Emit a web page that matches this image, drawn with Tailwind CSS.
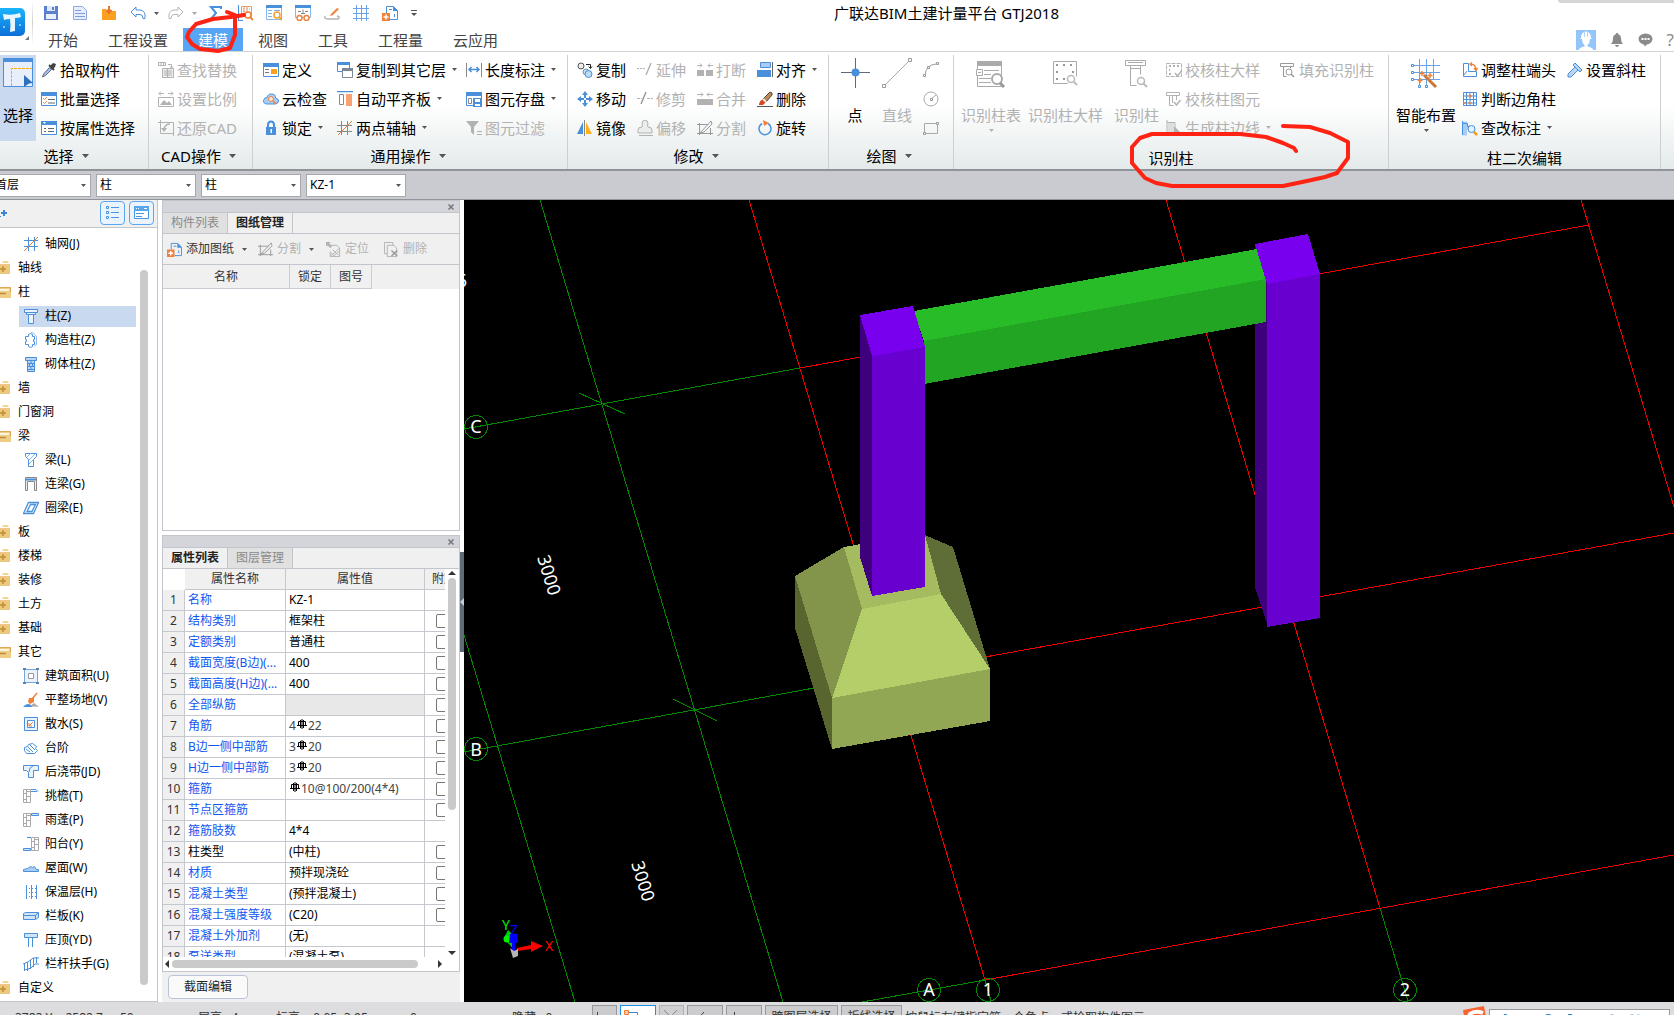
<!DOCTYPE html>
<html lang="zh-CN">
<head>
<meta charset="utf-8">
<title>广联达BIM土建计量平台 GTJ2018</title>
<script src="https://cdn.jsdelivr.net/npm/@tailwindcss/browser@4"></script>
</head>
<body class="relative flex h-screen flex-col overflow-hidden bg-white font-['Noto_Sans','Noto_Sans_CJK_SC',sans-serif] text-xs text-black">

<header class="flex h-[52px] shrink-0 border-b border-[#d4d4d4]">
  <div class="flex w-8 shrink-0 items-start pt-2">
    <svg class="h-8 w-8" viewBox="0 0 32 32" aria-label="GTJ"><defs><linearGradient id="lg" x1="0" y1="0" x2="0" y2="1"><stop offset="0" stop-color="#19b4fa"/><stop offset="1" stop-color="#0d6fd8"/></linearGradient></defs><rect x="-4" y="0" width="29" height="28" rx="5" fill="url(#lg)"/><path d="M3 6q9 2 17-1l1 4q-3 1-6 1v13l-5 1q1-7 0-13-4 0-6 1z" fill="#e8f7ff"/><circle cx="4" cy="19" r="1" fill="#9be0ff"/><circle cx="20" cy="17" r="1" fill="#9be0ff"/><path d="M29 28v4h-4z" fill="#777"/></svg>
  </div>
  <div class="h-[45px] w-px bg-linear-to-b from-white via-[#d0d0d0] to-white"></div>
  <div class="flex min-w-0 flex-1 flex-col">
    <div class="flex h-[28px] shrink-0 items-center pb-[2px] pl-1">
      <div id="quick" class="flex w-[392px] shrink-0 items-center"></div>
      <h1 class="flex-1 pr-[210px] text-center text-[15px] leading-6 whitespace-nowrap">广联达BIM土建计量平台 GTJ2018</h1>
    </div>
    <div class="flex min-h-0 flex-1 items-stretch">
      <nav id="tabs" class="flex text-[15px] text-[#444]"></nav>
      <div class="ml-auto flex shrink-0 items-center gap-[14px] text-[#8a8a8a]">
        <button aria-label="用户" class="block"><svg class="size-5" viewBox="0 0 20 20"><rect width="20" height="20" fill="#92c6fb"/><path d="M5 8q0-6 5-6.500q5 .5 5 6.500l1 1H4zM6 9h8q0 4-2.500 6v1.500q5 1 6 3.500h-15q1-2.500 6-3.500V15Q6 13 6 9z" fill="#fff"/><path d="M8.500 2v5M11.500 2v5" stroke="#92c6fb" stroke-width=".7"/></svg></button>
        <button aria-label="通知" class="block"><svg class="size-[14px]" viewBox="0 0 14 14" fill="currentColor"><path d="M7 0q1.300 0 1.300 1.200Q11 2.200 11 5.500q0 3.500 2 5.500H1q2-2 2-5.500 0-3.300 2.700-4.300Q5.700 0 7 0zM5 12h4q-.5 2-2 2t-2-2z"/></svg></button>
        <button aria-label="消息" class="block"><svg class="size-[15px]" viewBox="0 0 15 15"><ellipse cx="7.500" cy="7" rx="7" ry="5.500" fill="currentColor"/><path d="M5 11h5l-3 3.500z" fill="currentColor"/><path d="M3.500 6h2v2h-2zM6.500 6h2v2h-2zM9.500 6h2v2h-2z" fill="#fff"/></svg></button>
        <button aria-label="帮助" class="text-[17px] leading-5">?</button>
      </div>
    </div>
  </div>
</header>

<section id="ribbon" aria-label="建模" class="flex h-[119px] shrink-0 overflow-hidden border-b-2 border-[#90949a] bg-linear-to-b from-white from-45% to-[#e4eaea]"></section>

<div id="combos" class="flex h-[29px] shrink-0 items-center gap-[5px] border-b border-[#90949a] bg-[#c9cbd0]"></div>

<main class="flex min-h-0 flex-1">
  <aside class="flex w-[158px] shrink-0 flex-col border-r border-b border-[#c2c5ca] bg-white">
    <div class="flex h-7 shrink-0 items-center border-b border-[#c2c5ca] bg-[#f0f0f0] pb-[2px]">
      <svg class="h-4 w-2" viewBox="0 0 8 16"><path d="M4 5v6M1 8h6" stroke="#3d85d6" stroke-width="2"/><path d="M0 11h1v1H0z" fill="#3d85d6"/></svg>
      <button aria-label="列表视图" class="ml-[92px] flex h-6 w-[25px] items-center justify-center rounded border border-[#5ba7ee] bg-[#eaf4ff]"><svg class="size-[15px]" viewBox="0 0 15 15" fill="none" stroke="#4a95e0"><path d="M1.500 1.500h2v2h-2zM1.500 6.500h2v2h-2zM1.500 11.500h2v2h-2zM6 2.500h8M6 7.500h8M6 12.500h8"/></svg></button>
      <button aria-label="面板视图" class="ml-1 flex h-6 w-[25px] items-center justify-center rounded border border-[#5ba7ee] bg-[#eaf4ff]"><svg class="size-[15px]" viewBox="0 0 15 15"><path d="M.5 1.500h14v12H.5z" fill="#fff" stroke="#4a95e0"/><path d="M0 1h15v5H0z" fill="#58a5ec"/><path d="M2 3h1v1H2zM4 3h1v1H4zM10 3h3v1h-3z" fill="#fff"/><path d="M2 8.500h8M2 11.500h6" stroke="#4a95e0"/></svg></button>
    </div>
    <div class="flex min-h-0 flex-1 overflow-hidden">
      <ul id="tree" class="w-[140px] shrink-0 pt-1"></ul>
      <div class="mt-[42px] mb-4 w-2 rounded-full bg-[#cacaca]"></div>
    </div>
  </aside>

  <div class="flex w-[302px] shrink-0 flex-col pl-1">
    <section aria-label="图纸管理" class="flex h-[331px] shrink-0 flex-col border border-[#c2c5cc]">
      <div class="flex h-[11px] shrink-0 items-center justify-end bg-[#d3d5db] pr-1"><button aria-label="关闭" class="block"><svg class="size-2" viewBox="0 0 8 8"><path d="M1.500 1.500l5 5M6.500 1.500l-5 5" stroke="#777" stroke-width="1.500"/></svg></button></div>
      <div class="flex h-[22px] shrink-0 border-y border-[#c2c5cc] bg-[#f0f0f0] leading-5">
        <button class="w-[65px] border-r border-[#c2c5cc] bg-[#e0e0e0] text-[#8a8a8a]">构件列表</button>
        <button class="w-[65px] border-r border-[#c2c5cc] font-bold text-[#222]">图纸管理</button>
      </div>
      <div id="sheetbar" class="flex h-[31px] shrink-0 items-center border-b border-[#c2c5cc] bg-[#f0f0f0] pl-1"></div>
      <table class="w-full table-fixed border-separate border-spacing-0 bg-[#f0f0f0] text-[#333]">
        <thead><tr class="h-6"><th class="w-[127px] border-r border-b border-[#c9ccd2] p-0 font-normal">名称</th><th class="w-[41px] border-r border-b border-[#c9ccd2] p-0 font-normal">锁定</th><th class="w-[41px] border-r border-b border-[#c9ccd2] p-0 font-normal">图号</th><td></td></tr></thead>
      </table>
    </section>

    <section aria-label="属性列表" class="mt-1 flex min-h-0 flex-1 flex-col bg-[#f0f0f0]">
      <div class="flex min-h-0 flex-1 flex-col border border-[#c2c5cc] bg-white">
        <div class="flex h-[11px] shrink-0 items-center justify-end bg-[#d3d5db] pr-1"><button aria-label="关闭" class="block"><svg class="size-2" viewBox="0 0 8 8"><path d="M1.500 1.500l5 5M6.500 1.500l-5 5" stroke="#777" stroke-width="1.500"/></svg></button></div>
        <div class="flex h-[22px] shrink-0 border-y border-[#c2c5cc] bg-[#f0f0f0] leading-5">
          <button class="w-[65px] border-r border-[#c2c5cc] font-bold text-[#222]">属性列表</button>
          <button class="w-[65px] border-r border-[#c2c5cc] bg-[#e0e0e0] text-[#8a8a8a]">图层管理</button>
        </div>
        <div class="flex min-h-0 flex-1">
          <div class="w-[282px] shrink-0 overflow-hidden">
            <table class="w-[300px] table-fixed border-separate border-spacing-0">
              <colgroup><col class="w-[22px]"><col class="w-[101px]"><col class="w-[139px]"><col></colgroup>
              <thead><tr class="h-[21px] bg-[#f0f0f0] text-[#333]"><td class="bg-white"></td><th class="border-r border-b border-[#c5c8ce] p-0 leading-4 font-normal">属性名称</th><th class="border-r border-b border-[#c5c8ce] p-0 leading-4 font-normal">属性值</th><th class="border-b border-[#c5c8ce] py-0 pr-0 pl-[7px] text-left leading-4 font-normal whitespace-nowrap">附加</th></tr></thead>
              <tbody id="props"></tbody>
            </table>
          </div>
          <div class="ml-[3px] flex w-2 flex-col items-center gap-[3px] py-[2px]">
            <svg class="h-1 w-2 shrink-0" viewBox="0 0 8 4"><path d="M0 4l4-4 4 4z" fill="#333"/></svg>
            <div class="min-h-0 w-full flex-[233] rounded-full bg-[#cacaca]"></div>
            <div class="flex-[136]"></div>
            <svg class="h-1 w-2 shrink-0" viewBox="0 0 8 4"><path d="M0 0l4 4 4-4z" fill="#333"/></svg>
          </div>
        </div>
        <div class="flex h-[14px] shrink-0 items-center pl-[2px]">
          <svg class="h-2 w-1" viewBox="0 0 4 8"><path d="M4 0v8L0 4z" fill="#333"/></svg>
          <div class="ml-[3px] h-2 w-[246px] rounded-full bg-[#cacaca]"></div>
          <svg class="ml-5 h-2 w-1" viewBox="0 0 4 8"><path d="M0 0v8l4-4z" fill="#333"/></svg>
        </div>
      </div>
      <div class="flex h-[30px] shrink-0 items-center pl-1.5"><button class="h-6 w-20 rounded-sm border border-[#b9c4d8] bg-[#fafafa] text-[#222]">截面编辑</button></div>
    </section>
  </div>

  <div class="flex w-1 shrink-0 flex-col pt-[352px]"><div class="flex h-[100px] items-center bg-[#5f6b76]"><svg class="h-2 w-1" viewBox="0 0 4 8"><path d="M4 0v8L0 4z" fill="#c5ccd3"/></svg></div></div>

  <div class="relative min-w-0 flex-1 bg-black">
    <svg class="absolute inset-0 h-full w-full font-['Noto_Sans',sans-serif]" viewBox="464 200 1210 802" preserveAspectRatio="xMinYMin slice" shape-rendering="crispEdges" aria-label="三维视图">
      <g stroke="#008a00" fill="none">
        <path d="M540 200L783 1002M464 635L575 1002M464 429L800 368M464 752L814 688M579 393L625 414M673 699L717 721M862 1002L985 980L991 1001M1380 908L1408 1001"/>
      </g>
      <g stroke="#f00000" fill="none">
        <path d="M749 200L985 980L1674 855M1166 200L1380 908M1581 200L1674 507M800 368L1589 225M985 657L1674 533"/>
      </g>
      <path d="M795 576L844 547L862 609L832 698z" fill="#83954a"/>
      <path d="M795 576L832 698V749L795 628z" fill="#58652f"/>
      <path d="M844 547L925 533L941 594L862 609z" fill="#a5bb5f"/>
      <path d="M925 535L953 547L990 669L941 594z" fill="#5f6e37"/>
      <path d="M862 609L941 594L990 669L832 698z" fill="#b4ce69"/>
      <path d="M832 698L990 669V721L832 749z" fill="#91a754"/>
      <path d="M1255 244L1268 284V627L1255 587z" fill="#3f007d"/>
      <path d="M914 311L1257 249L1266 279L924 341z" fill="#28bd28"/>
      <path d="M924 341L1266 279V322L924 384z" fill="#22a522"/>
      <path d="M1267 284L1320 274V618L1267 627z" fill="#6800d0"/>
      <path d="M1255 244L1308 234L1320 274L1267 284z" fill="#7800ee"/>
      <path d="M860 315L872 356V596L860 557z" fill="#3f007d"/>
      <path d="M872 356L925 347V587L872 596z" fill="#6800d0"/>
      <path d="M860 315L913 306L925 347L872 356z" fill="#7800ee"/>
      <g stroke="#008a00" fill="none"><circle cx="476" cy="427" r="11.500"/><circle cx="476" cy="749" r="11.500"/><circle cx="929" cy="990" r="11.500"/><circle cx="988" cy="990" r="11.500"/><circle cx="1405" cy="990" r="11.500"/></g>
      <g fill="#fff" font-size="18" text-anchor="middle">
        <text x="476" y="433">C</text><text x="476" y="756">B</text><text x="929" y="996">A</text><text x="988" y="996">1</text><text x="1405" y="996">2</text>
        <text transform="translate(543 577) rotate(73)">3000</text><text transform="translate(637 883) rotate(73)">3000</text><text x="462" y="287">6</text>
      </g>
      <g shape-rendering="auto">
        <path d="M514 950L504 938L508 930L514 936z" fill="#00d000"/>
        <circle cx="507" cy="939" r="3.500" fill="#00f000"/>
        <path d="M512 952h3v-9h3l-1-9h-7l-1 9h3z" fill="#0000ff"/>
        <path d="M517 948l14-3v-4l12 5-12 6v-3l-14 2z" fill="#f00"/>
        <path d="M510 948l4 3 4-2v7l-5 2z" fill="#b5b5b5"/>
      </g>
      <g font-size="14" text-anchor="middle"><text x="506" y="930" fill="#00f000">Y</text><text x="514" y="935" fill="#00f">Z</text><text x="549" y="951" fill="#f00">X</text></g>
    </svg>
  </div>
</main>

<footer class="flex h-[13px] shrink-0 items-start overflow-hidden bg-[#dddddf] pt-[3px] leading-5 whitespace-nowrap text-[#333]">
  <span class="mt-[3px] w-[198px] shrink-0 pl-[15px]">3782 Y = 2582 Z = -50</span>
  <span class="mt-[3px] w-[78px] shrink-0">层高:&nbsp; 4</span>
  <span class="mt-[3px] w-[134px] shrink-0">标高:&nbsp; -0.05~3.95</span>
  <span class="mt-[3px] w-[102px] shrink-0">0</span>
  <span class="mt-[3px] w-20 shrink-0">隐藏:&nbsp; 0</span>
  <div class="flex shrink-0 gap-[3px]">
    <button aria-label="正交" class="h-6 w-[25px] border border-[#999] bg-[#ccccce]"><svg class="size-5" viewBox="0 0 20 20"><path d="M4.500 5v11h11" stroke="#444" fill="none"/></svg></button>
    <button aria-label="对象捕捉" class="h-6 w-9 border border-[#1e8fe8] bg-white"><svg class="h-5 w-8" viewBox="0 0 32 20"><path d="M5.500 5.500h11v11" stroke="#3f87d2" fill="none"/><path d="M3.500 3.500h4v4h-4z" fill="#fcc79a" stroke="#f08040"/></svg></button>
    <button aria-label="交点" class="h-6 w-[25px] border border-[#b0b0b0] bg-[#cfcfd1]"><svg class="size-5" viewBox="0 0 20 20"><path d="M4 3l12 13M17 3L5 16" stroke="#888"/></svg></button>
    <button aria-label="垂点" class="h-6 w-9 border border-[#999] bg-[#ccccce]"><svg class="h-5 w-8" viewBox="0 0 32 20"><path d="M16 5L6 16h20" stroke="#444" fill="none"/></svg></button>
    <button aria-label="中点" class="h-6 w-9 border border-[#999] bg-[#ccccce]"><svg class="h-5 w-8" viewBox="0 0 32 20"><path d="M7.500 5v12M3 9.500h9" stroke="#444"/></svg></button>
    <button class="h-6 w-[73px] border border-[#999] bg-[#ccccce]">跨图层选择</button>
    <button class="h-6 w-[61px] border border-[#999] bg-[#ccccce]">折线选择</button>
  </div>
  <span class="mt-[3px] ml-[3px]">按鼠标左键指定第一个角点，或拾取构件图元</span>
  <div class="mr-1 ml-auto flex shrink-0">
    <svg class="h-6 w-[26px]" viewBox="0 0 26 24"><path d="M0 5l21-4 4 22H3z" fill="#f9622f"/><path d="M20 8q-8-3-13 1-2 4 5 5t6 6" stroke="#fff" stroke-width="4" fill="none"/></svg>
    <div class="mt-1 h-6 w-[181px] border border-[#999] bg-white"><svg class="h-5 w-full" viewBox="0 0 181 20" fill="#2a7fd0"><path d="M14 4h3v10h-3zM54 6q5-4 10 0v2H54zM79 4h4v6h-4z"/><path d="M122 4h3v8h-3zM142 4h3v8h-3zM149 4h2v8h-2z" fill="#a8c8e8"/></svg></div>
  </div>
</footer>

<div class="absolute top-0 right-0 h-[3px] w-[116px] rounded-bl bg-[#d6d6d6]"></div>

<!-- Pen marks drawn over the ribbon -->
<svg class="pointer-events-none absolute top-0 left-0 h-[200px] w-[1400px]" viewBox="0 0 1400 200" fill="none" stroke="#ff2314" stroke-linecap="round" stroke-linejoin="round">
  <path stroke-width="4" d="M244 15L231 17L213 19L196 24L189 32L187 37L192 44L200 49L218 51L230 48L235 35L235 15L227 12"/>
  <path stroke-width="4" d="M1296 151L1294 148L1283 143L1266 137L1240 134H1152L1140 138L1132 147V163L1145 178L1156 183L1172 186H1283L1307 181L1325 177L1337 173L1348 158V142L1330 133L1310 127L1283 126"/>
</svg>

<script>
const B='#4a8fdb', G='#b2b2b2', O='#f0813a';
const win=(c)=>`<path d="M.5 1.500h15v13H.5z" fill="#fff" stroke="${c}"/><path d="M0 1h16v4H0z" fill="${c}"/>`;
const column=(c,f='none')=>`<path d="M1.500 1.500h13v3h-2v2h-2v9h-5v-9h-2v-2h-2z" fill="${f}" stroke="${c}"/><path d="M3 4.500h10M5.500 6.500h5" stroke="${c}"/>`;
const wall='<path d="M.5 1.500h7v13h-7zM.5 5.500h3M3.500 3.500h4M3.500 1.500v13M3.500 8.500h4M.5 11.500h3" fill="none" stroke="#aaa"/>';
const icons={
save:`<path d="M1 1h14v14H1z" fill="#5b80cf"/><path d="M4 1h8v5H4z" fill="#dfe9fb"/><path d="M9 2h2v3H9z" fill="#5b80cf"/><path d="M3 9h10v5H3z" fill="#e9f0fc"/>`,
doc:`<path d="M1.500 1.500h9l4 4v9h-13z" fill="#e6eeff" stroke="#8fa9e0"/><path d="M3 5.500h6M3 8.500h10M3 11.500h10" stroke="#7d9be0"/>`,
open:`<path d="M1 4h4l1 2h9v9H1z" fill="#fba01f"/><path d="M8 1v6M5.500 5L8 8l2.500-3" stroke="#e8742a" stroke-width="2" fill="none"/>`,
undo:`<path d="M6 2L1 7l5 5V9.500h4q3 0 3 4h2q1-8-5-8.500H6z" fill="#fff" stroke="${B}"/>`,
redo:`<path d="M10 2l5 5-5 5V9.500H6q-3 0-3 4H1Q0 5.500 6 5h4z" fill="#fff" stroke="#b5b5b5"/>`,
sigma:`<path d="M13 4V2H3l5 6-5 6h10v-2.500" fill="none" stroke="${B}" stroke-width="2"/>`,
sheetfind:`<path d="M1.500 0v15M1 15.500h5" stroke="${B}"/><path d="M4.500 1.500h10v10h-10z" fill="#fff" stroke="#e59a6a"/><path d="M6 4h7M6 7h7M7 2v7M10 2v7" stroke="#e59a6a" stroke-dasharray="2 1"/><circle cx="11" cy="10" r="3" fill="#fff" stroke="${O}" stroke-width="1.500"/><path d="M13 12l3 3" stroke="${O}" stroke-width="2"/>`,
winfind:`<path d="M.5.500h15v14H.5z" fill="#fff" stroke="#8ab8ea"/><path d="M0 0h16v3H0z" fill="${B}"/><path d="M2 5.500h4M2 8.500h4M2 11.500h4M8 5.500h6" stroke="#7fb2ea"/><circle cx="11" cy="10" r="3" fill="#fff" stroke="#f5a032" stroke-width="1.500"/><path d="M13 12l3 3" stroke="#f5a032" stroke-width="2"/>`,
winglass:`<path d="M.5.500h15v12H.5z" fill="#fff" stroke="#8ab8ea"/><path d="M0 0h16v3H0z" fill="${B}"/><path d="M3 6.500h3M10 6.500h3M8 4.500v4M6 8.500h4" stroke="#888"/><circle cx="4.500" cy="13" r="2.500" fill="#fff" stroke="${O}" stroke-width="1.400"/><circle cx="11.500" cy="13" r="2.500" fill="#fff" stroke="${O}" stroke-width="1.400"/>`,
pen:`<path d="M7 9l6-6 2 1-6 6-3 1z" fill="${O}"/><path d="M1 11q-1 3 3 3h10q3-2-1-3" fill="none" stroke="#b5b5b5" stroke-width="1.500"/>`,
axis:`<path d="M3.500 0v16M8.500 0v16M13.500 0v16M0 3.500h16M0 8.500h16M0 13.500h16" stroke="#6ba4e6"/>`,
add:`<path d="M4.500 8V1.500h7l4 4v9H8M7 4.500h3M12.500 12V9" fill="none" stroke="${B}"/><path d="M11 1v5h5z" fill="${B}"/><path d="M0 8h8v8H0z" fill="${O}"/><path d="M4 9.500v5M1.500 12h5" stroke="#fff" stroke-width="1.500"/>`,
more:`<path d="M5 5.500h6" stroke="#555"/><path d="M5 8h6l-3 3z" fill="#555"/>`,
pick:`<path d="M9 4l3-3 3 1-1 3-3 3z" fill="#444"/><path d="M8 3l5 5" stroke="#444" stroke-width="2"/><path d="M8.500 5.500l2 2-6 6-3 1.500 1-3z" fill="#9cc3ef" stroke="#667"/>`,
batch:`${win(B)}<path d="M2 7l1.500 1.500L6 6M2 11l1.500 1.500L6 10" stroke="${O}" fill="none"/><path d="M7 8.500h7M7 12h7" stroke="#666"/>`,
attr:`${win(B)}<path d="M2 2h3l-1.500 2z" fill="#fff"/><path d="M3 8.500h2M7 8.500h6M3 11.500h2M7 11.500h6" stroke="#666"/>`,
findrep:`<path d="M.5.500h7v3h-7zM3 0v4M5.500 0v4M10 2.500h3.500V6M12 4.500l1.500 1.500 1.500-1.500" stroke="${G}" fill="none"/><path d="M4.500 6.500h11v9h-11z" stroke="${G}" fill="#eee"/><path d="M6 9h8M6 11h8M6 13h8M9.500 7v8" stroke="${G}"/>`,
scale:`<path d="M1 2.500h5M10 2.500h5M3 .5l-2 2 2 2M13 .5l2 2-2 2M.5 6.500h15v9H.5z" stroke="${G}" fill="none"/><path d="M2 14l4-5 3 3 2-2 3 4z" fill="${G}"/>`,
restore:`<path d="M0 2.500h15.500V16M2.500 0v13.500H16" stroke="${G}" fill="none"/><path d="M12 4q-5 0-6 5" stroke="${G}" stroke-width="1.500" fill="none"/><path d="M3 8h6l-3 4z" fill="${G}"/>`,
define:`${win(B)}<path d="M2 7.500h4M2 10.500h4" stroke="#777"/><path d="M8 7h6v5H8z" fill="#f9a31b"/>`,
cloud:`<path d="M4 13q-4-.5-3.500-3.500T4 6.500Q5 2.500 9 3t3.500 4q3 .5 3 3T12 13z" fill="#a9cdf4" stroke="${B}"/><circle cx="8" cy="8" r="2.500" fill="#fbe3d0" stroke="${O}"/><path d="M10 10l3 3" stroke="${O}" stroke-width="1.500"/>`,
lock:`<path d="M5 8V5q0-3.500 3-3.500T11 5v3" fill="none" stroke="${B}" stroke-width="2"/><path d="M3 7h10v8H3z" fill="${B}"/><path d="M7.500 9h1.500v4H7.500z" fill="#fff"/>`,
layer:`<path d="M.5.500h12v9H.5z" fill="#fff" stroke="${B}"/><path d="M0 0h13v3H0z" fill="${B}"/><path d="M5.500 6.500h10v9h-10z" fill="#fff" stroke="#7b8896"/><path d="M5 6h11v3H5z" fill="#7b8896"/>`,
slab:`<path d="M0 .5h16" stroke="${B}" stroke-width="1.500"/><path d="M2.500 3.500h4v10h-4z" fill="none" stroke="#888"/><path d="M9 3h6v12H9z" fill="#fba06f"/>`,
twopt:`<path d="M4.500 1v14M10.500 1v14M0 5.500h15M0 11.500h15" stroke="#888"/><path d="M1 15L15 1" stroke="${O}"/>`,
len:`<path d="M.5 1v14M15.500 1v14" stroke="#888"/><path d="M3 7.500h10M5.500 5L3 7.500 5.500 10M10.500 5L13 7.500 10.500 10" stroke="${B}" stroke-width="1.500" fill="none"/>`,
store:`${win(B)}<path d="M2.500 7.500h3v5h-3z" fill="none" stroke="#888"/><path d="M7 7h9v9H7z" fill="${B}"/><path d="M9 8h5v3H9zM9 13h5v2H9z" fill="#fff"/>`,
filter:`<path d="M0 1h13L8 7v8l-3-3V7z" fill="${G}"/><path d="M11 11.500h5M11 14.500h5" stroke="${G}"/>`,
copy:`<circle cx="4" cy="4" r="3" fill="#eee" stroke="#555"/><path d="M9 2.500h4.500V6M11.500 4.500l2 2 1.500-2" stroke="#222" fill="none"/><circle cx="9" cy="10" r="3" fill="#cde" stroke="#6899bb"/><circle cx="11.500" cy="12" r="3.500" fill="#bcdcf6" stroke="${B}"/>`,
move:`<path d="M8 0l3 4H9v3H7V4H5zM8 16l3-4H9V9H7v3H5zM0 8l4-3v2h3v2H4v2zM16 8l-4-3v2H9v2h3v2z" fill="${B}"/>`,
mirror:`<path d="M6 2v12H0z" fill="${B}"/><path d="M9 2v12h6z" fill="#fbb21b"/><path d="M7.500 0v16" stroke="#888"/>`,
extend:`<path d="M0 6.500h9" stroke="${G}" stroke-dasharray="2 1"/><path d="M9 13l5-12" stroke="${G}" stroke-width="1.500"/>`,
trim:`<path d="M0 7.500h5M10 7.500h6" stroke="${G}" stroke-dasharray="3 1"/><path d="M4 13L9 1" stroke="#999" stroke-width="1.500"/>`,
offset:`<path d="M1 10q0-3 4-3 1-2 0-3 0-4 3-4t3 4q-1 1 0 3 4 0 4 3v3H1z" fill="#ececec" stroke="${G}"/><path d="M2 15.500h14" stroke="${G}"/>`,
brk:`<path d="M0 3.500h5M11 3.500h5M3 1.500l2 2-2 2M13 1.500l-2 2 2 2" stroke="${G}" fill="none"/><path d="M0 8h7v6H0zM9 8h7v6H9z" fill="${G}"/>`,
merge:`<path d="M0 3.500h6M10 3.500h6M4 1.500l2 2-2 2M12 1.500l-2 2 2 2" stroke="${G}" fill="none"/><path d="M0 8h16v6H0z" fill="${G}"/>`,
split:`<path d="M0 4.500h11M0 13.500h16M2.500 3v12M13.500 8v7M3 13L14 1l1 3-8 8z" fill="none" stroke="#999"/>`,
align:`<path d="M3.500.500h10v5h-10z" fill="#a8cdf5" stroke="${B}"/><path d="M0 8h14v7H0z" fill="${B}"/><path d="M15.500 0v15" stroke="#666"/>`,
erase:`<path d="M0 15.500h16" stroke="#555"/><path d="M6 8l7-7 2 1v2l-6 7z" fill="#b98d5a" stroke="#543"/><path d="M6 8l3 3-3 3H2q0-4 4-6z" fill="#d8451f"/><path d="M6 8l3 3" stroke="#eee" stroke-width="2"/>`,
rotate:`<path d="M11 3.500a6 6 0 1 1-6 0" fill="none" stroke="${B}" stroke-width="1.500"/><path d="M6 0l6 3-5 3z" fill="${O}"/>`,
arc:`<path d="M2 13Q3 3 13 2" stroke="#999" fill="none"/><path d="M.5 12.500h2v2h-2zM13.500.500h2v2h-2zM4.500 4.500h2v2h-2z" fill="#fff" stroke="#999"/>`,
circ:`<circle cx="8" cy="8" r="7" fill="none" stroke="#aaa"/><path d="M8 8l5-4" stroke="#aaa"/><path d="M7.500 7.500h2v2h-2z" fill="#fff" stroke="#999"/>`,
rect:`<path d="M1.500 3.500h13v10h-13z" fill="none" stroke="#aaa"/><path d="M.5 12.500h2v2h-2zM13.500 2.500h2v2h-2z" fill="#fff" stroke="#999"/>`,
chk1:`<path d="M.5 1.500h15v13H.5z" fill="none" stroke="${G}" stroke-dasharray="4 1"/><path d="M3 4h2M7 4h2M11 4h2M3 8h1M3 12h2" stroke="${G}" stroke-width="2"/><path d="M9 11l2.500 3 4-5" stroke="${G}" fill="none" stroke-width="1.500"/>`,
chk2:`<path d="M.5 1.500h13v3h-3V9M.5 1.500v3h3v10h4" fill="none" stroke="${G}"/><path d="M4 4.500h7M6.500 5v7" stroke="${G}"/><path d="M8 11l2.500 3 4-5" stroke="${G}" fill="none" stroke-width="1.500"/>`,
edge:`<path d="M1 0v16M1 2.500h8V9" stroke="${G}" fill="none"/><path d="M2 3h7v11H2z" fill="#ddd"/><path d="M8 6l7 7h-4l-3 3z" fill="${G}"/>`,
fill:`<path d="M.5 1.500h13v3h-13zM3.500 4.500v10h3M10.500 4.500v2" fill="none" stroke="#999"/><circle cx="9" cy="10" r="3" fill="#fff" stroke="#999"/><path d="M11 12l3 3" stroke="#999" stroke-width="1.500"/>`,
adj:`<path d="M1.500 1.500h5v8h8v5h-13zM5 9l-3 4" fill="none" stroke="${B}"/><path d="M8 2q6 0 6 6M12 6l2 2.500L15.500 6M10 .5L8 2l2 2" stroke="${O}" stroke-width="1.300" fill="none"/>`,
judge:`<path d="M1.500 1.500h13v13h-13zM4.500 1v13M8 1v13M11.500 1v13M1 5h14M1 8.500h14M1 12h14" fill="none" stroke="${B}"/><path d="M6.500 5h3M8 3.500v3M1 12h3M6.500 12h3" stroke="${O}" stroke-width="1.500"/>`,
chkdim:`<path d="M0 1.500h5v4h3v4H5v6H.5z" fill="#a8cdf5"/><path d="M.5 1v14M0 3.500h5.500v3H8" stroke="${B}" fill="none"/><circle cx="9.500" cy="9" r="3.500" fill="#e5f1fd" stroke="${B}"/><path d="M12 12l3 3" stroke="#f59a1b" stroke-width="2.500"/>`,
slant:`<path d="M8 1l7 7-2 2-2-2-7 7H1v-3l7-7-2-2z" fill="#b8d6f7" stroke="${B}"/><path d="M6 3l7 7" stroke="${B}"/>`,
locate:`<path d="M4.500 6V3.500h7l3 3v9h-10V10" fill="none" stroke="${G}"/><path d="M0 0h5L3.500 1.500l3 3-2 2-3-3L0 5z" fill="${G}"/><path d="M5 15l9-8M5 11l4 4M8 15l6-5M7 8l6 6" stroke="${G}"/>`,
del:`<path d="M3.500 12.500h-3v-12h9v3M3.500 3.500h7l3 3v9h-10z" fill="none" stroke="${G}"/><path d="M8 9l6 6M14 9l-6 6" stroke="#999" stroke-width="1.500"/>`,
zw:`<path d="M5.500 1v14M11.500 1v14M1 4.500h14M1 10.500h14" stroke="${B}"/><path d="M1 15L15 1" stroke="${O}"/>`,
col:column(B,'#eaf3fd'),
gz:`<path d="M5.500 2.500l2-1 2 1v2h2v3h-1v2h1v3h-2v2l-2 1-2-1v-2h-3v-3h1v-2h-1v-3h3z" fill="#fff" stroke="${B}"/><path d="M8 .5q3 0 3.500 2l2 2v8l-2 1.500" stroke="#8ab8ea" fill="none"/>`,
brick:`<path d="M2.500 1.500h11v3h-2v11h-7v-11h-2z" fill="#b9d6f6" stroke="${B}"/><path d="M3 4.500h10M5 7.500h6M5 10.500h6M5 13.500h6M8 5v3M6.500 8v3M9.500 8v3M8 11v3" stroke="${B}"/>`,
beam:`<path d="M2.500 1.500h11v3l-3 3v7h-5v-7l-3-3z" fill="#fff" stroke="${B}"/><path d="M4 5l4-4M6 8l6-6M6 12l4-4" stroke="#8ab8ea"/>`,
lbeam:`<path d="M2.500 1.500h11v13h-2v-9h-7v9h-2z" fill="#eee" stroke="#888"/><path d="M3 3.500h10" stroke="${B}" stroke-width="2"/>`,
ring:`<path d="M5.500 2.500h10l-5 11H.5zM7.500 4.500h5l-3.500 7H4z" fill="none" stroke="${B}" stroke-width="1.300"/>`,
area:`<path d="M1.500 1.500h13v13h-13z" fill="#eaf3fd" stroke="#7aa6d8"/><path d="M5.500 5.500h5v5h-5z" fill="#fff" stroke="#999"/><path d="M0 0h3v2H0zM13 0h3v2h-3zM0 14h3v2H0zM13 14h3v2h-3z" fill="#5580b0"/>`,
level:`<path d="M0 15q4-5 8-2l2 2z" fill="${B}"/><path d="M7 14l4-3 5 4z" fill="#aaa"/><path d="M6 6h5v4l-4 2-2-2z" fill="${O}"/><path d="M9 7l5-6" stroke="${O}" stroke-width="1.500"/>`,
apron:`<path d="M1.500 1.500h13v13h-13z" fill="#eaf3fd" stroke="${B}"/><path d="M4.500 4.500h7v7h-7z" fill="#fff" stroke="${B}"/><path d="M10 6l-4 4M6 7v3h3" stroke="${O}" fill="none"/>`,
step:`<path d="M1.500 7.500l3-1 1-2 4-1 4 3-1 2 2 2-3 3h-8l-2-3zM5 7l5 5M7 5l5 5M3 9l4 3" fill="none" stroke="${B}"/>`,
post:`<path d="M.5 1.500h15v5h-5v7h-5v-5l-2-2h-3z" fill="#eaf3fd" stroke="${B}"/><path d="M6 8q0-5 4-6" stroke="${B}" fill="none"/>`,
eave:`${wall}<path d="M8 1.500h5l2 2M8 3.500h6" stroke="${B}" fill="none"/>`,
canopy:`${wall}<path d="M8.500 1.500h7v2h-7z" stroke="${B}" fill="#cfe3fa"/>`,
balcony:`<g transform="translate(8 0)">${wall}</g><path d="M.5 12.500h7v2h-7zM4 1.500h4" stroke="${B}" fill="#cfe3fa"/>`,
roof:`<path d="M.5 9.500l4-1 3-2 2 1 2-1 2 3h2v2H.5z" fill="#a8cbf2" stroke="${B}"/>`,
insul:`<path d="M3.500 1v14M8.500 1v14M13.500 1v14" stroke="${B}"/><path d="M3 4.500h11M3 8.500h11M3 12.500h11" stroke="${B}" stroke-dasharray="1 2"/>`,
fence:`<path d="M.5 5.500l2-1h13v5l-3 2H.5zM12.500 11V7l3-2M1 7.500h11" fill="#cfe3fa" stroke="${B}"/>`,
top:`<path d="M1.500 1.500h13v4h-13z" fill="#cfe3fa" stroke="${B}"/><path d="M5.500 6v9M9.500 6v9" stroke="${B}"/>`,
rail:`<path d="M1.500 7v8M4.500 6v9M7.500 4v9M10.500 2v9M13.500 1v6M0 8l5-2 5-4h6M2 14l6-2 4-4h4" fill="none" stroke="${B}"/>`,
closed:`<path d="M-4 4h14v10H-4z" fill="#eec87f"/><path d="M3 1h5l1 2H2z" fill="#f3d596"/><path d="M3 6v6M0 9h6" stroke="#c08f35" stroke-width="1.500"/>`,
opened:`<path d="M-4 3h15v11H-4z" fill="#f0cd86"/><path d="M-4 3.500h14.500V8" stroke="#dcab52" fill="none"/><path d="M0 5h9v2H0z" fill="#fff5dd"/><path d="M0 9.500h6" stroke="#c08f35" stroke-width="1.500"/>`
};
const big={
select:`<path d="M.5 2.500h29v26H.5z" fill="#e8eefa" stroke="${B}"/><path d="M0 0h30v4H0z" fill="${B}"/><path d="M8.500 28V10.500H29" fill="none" stroke="#f5a81b" stroke-dasharray="3 1"/><path d="M21 17l9 8-4 .5-5 3.500z" fill="#2f6fbd"/>`,
point:`<path d="M15.500 0v11M15.500 18v12M1 14.500h11M19 14.500h11" stroke="#5c6b7a"/><circle cx="15.500" cy="14.500" r="4" fill="${B}"/>`,
line:`<path d="M3 27L27 3" stroke="#aaa"/><path d="M.5 26.500h3v3h-3zM26.500.500h3v3h-3z" fill="#fff" stroke="#999"/>`,
tbl:`<path d="M1.500 3.500h24v25h-24z" fill="#fff" stroke="#aaa"/><path d="M1 3h25v5H1z" fill="#aaa"/><path d="M.5 11.500h6v6h-6zM2 14.500h3M8 12.500h15M8 16.500h7M3 20.500h12M3 24.500h12" stroke="#aaa" fill="#fff"/><circle cx="21" cy="21" r="5" fill="#fff" stroke="#aaa" stroke-width="2"/><path d="M24 25l4 4" stroke="#999" stroke-width="3"/>`,
detail:`<path d="M17 25.500H2.500v-22h23v15" fill="none" stroke="#aaa"/><path d="M5 6h2v2H5zM12 6h2v2h-2zM19 6h2v2h-2zM5 13h2v2H5zM5 20h2v2H5zM12 20h2v2h-2zM21 13h2v2h-2z" fill="#999"/><circle cx="20" cy="21" r="3.500" fill="#fff" stroke="#bbb" stroke-width="1.500"/><path d="M23 24l3 3" stroke="#bbb" stroke-width="2"/>`,
idcol:`<path d="M3.500 2.500h20v5h-5v9M3.500 2.500v5h5v20h6" fill="none" stroke="#aaa"/><path d="M4 7.500h19M8 10.500h10M6 4.500h15" stroke="#aaa"/><circle cx="19" cy="23" r="3.500" fill="#fff" stroke="#bbb" stroke-width="1.500"/><path d="M21 25l4 4" stroke="#bbb" stroke-width="2"/>`,
smart:`<path d="M8.500 1v26M15.500 1v26M22.500 1v20M2 7.500h27M2 14.500h27M2 21.500h27" stroke="#6ba4e6"/><path d="M.5 6.500h2v2h-2zM.5 13.500h2v2h-2zM.5 20.500h2v2h-2zM7.500 27.500h2v2h-2zM14.500 27.500h2v2h-2z" fill="#fff" stroke="${B}"/><path d="M13 17l12 12" stroke="#c9783a" stroke-width="3"/><path d="M11 13v5M8.500 15.500h5M19 15v5M16.500 17.500h5M9 20v5M6.500 22.500h5" stroke="${O}" stroke-width="1.500"/>`
};
const ico=(n,c='size-4')=>`<svg class="${c} shrink-0" viewBox="0 0 16 16" aria-hidden="true">${icons[n]}</svg>`;
const arrow=(c='#555')=>`<svg class="h-[3px] w-[5px] shrink-0" viewBox="0 0 5 3" aria-hidden="true"><path d="M0 0h5L2.500 3z" fill="${c}"/></svg>`;
const put=(id,h)=>document.getElementById(id).innerHTML=h;

put('quick',[['save','保存','w-[29px]'],['doc','新建','w-[29px]'],['open','打开','w-[29px]'],['undo','撤销','w-[38px]',1],['redo','恢复','w-[40px]',1],['sigma','汇总计算','w-[29px]'],['sheetfind','查看工程量','w-[29px]'],['winfind','查看报表','w-[29px]'],['winglass','查看计算式','w-[29px]'],['pen','标记','w-[29px]'],['axis','轴网','w-[29px]'],['add','添加图纸','w-[24px]'],['more','更多','w-[20px]']]
 .map(([i,l,w,a])=>`<button aria-label="${l}" class="${w} flex items-center gap-2 pl-[6px]">${ico(i)}${a?arrow(i=='redo'?'#aaa':'#555'):''}</button>`).join(''));

put('tabs',['开始','工程设置','建模','视图','工具','工程量','云应用']
 .map(t=>`<button class="px-[15px] leading-[22px] ${t=='建模'?'bg-[#59a5f5] text-white':''}">${t}</button>`).join(''));

const small=([i,t,off,a])=>`<button class="flex h-[29px] items-center gap-[3px] text-[15px] leading-5 whitespace-nowrap ${off?'text-[#b2b2b2]':''}" ${t?'':'aria-label="绘图工具"'}>${ico(i)}${t}${a?`<span class="pl-[3px]">${arrow(off?'#b2b2b2':'#555')}</span>`:''}</button>`;
const col=(w,...items)=>`<div class="${w} shrink-0">${items.map(small).join('')}</div>`;
const large=(w,i,t,off,a,sel)=>`<button class="${w} flex h-[86px] shrink-0 flex-col items-center text-[15px] whitespace-nowrap ${off?'text-[#b2b2b2]':''} ${sel?'bg-[#c9d9f0]':''}"><svg class="mt-[3px] size-[30px] shrink-0" viewBox="0 0 30 30" aria-hidden="true">${big[i]}</svg><span class="mt-[17px] leading-5">${t}</span>${a?`<span class="mt-1">${arrow(off?'#b2b2b2':'#555')}</span>`:''}</button>`;
const group=(w,label,a,pad,body,lp='')=>`<div class="${w} flex shrink-0 flex-col pt-[3px]"><div class="flex h-[114px] flex-col border-r border-[#ccd0d3]"><div class="flex h-[88px] ${pad}">${body}</div><div class="flex flex-1 items-center justify-center gap-2 text-[15px] leading-5 ${lp}">${label}${a?'<svg class="h-1 w-[7px]" viewBox="0 0 7 4"><path d="M0 0h7L3.500 4z" fill="#555"/></svg>':''}</div></div></div>`;
put('ribbon',[
 group('w-[149px]','选择',1,'',large('w-9 mr-[5px]','select','选择',0,0,1)+col('',['pick','拾取构件'],['batch','批量选择'],['attr','按属性选择']),'pr-4'),
 group('w-[104px]','CAD操作',1,'pl-[9px]',col('',['findrep','查找替换',1],['scale','设置比例',1],['restore','还原CAD',1]),'pr-1'),
 group('w-[315px]','通用操作',1,'pl-[10px]',col('w-[74px]',['define','定义'],['cloud','云检查'],['lock','锁定',0,1])+col('w-[129px]',['layer','复制到其它层',0,1],['slab','自动平齐板',0,1],['twopt','两点辅轴',0,1])+col('',['len','长度标注',0,1],['store','图元存盘',0,1],['filter','图元过滤',1]),'pr-1'),
 group('w-[261px]','修改',1,'pl-[9px]',col('w-[60px]',['copy','复制'],['move','移动'],['mirror','镜像'])+col('w-[60px]',['extend','延伸',1],['trim','修剪',1],['offset','偏移',1])+col('w-[60px]',['brk','打断',1],['merge','合并',1],['split','分割',1])+col('',['align','对齐',0,1],['erase','删除'],['rotate','旋转']),'pr-1'),
 group('w-[125px]','绘图',1,'pl-[10px]',large('w-[32px]','point','点')+large('w-[52px]','line','直线',1)+col('',['arc','',1],['circ','',1],['rect','',1]),'pr-1'),
 group('w-[435px]','识别柱',0,'pl-1',large('w-[66px]','tbl','识别柱表',1,1)+large('w-[83px]','detail','识别柱大样',1)+large('w-[59px]','idcol','识别柱',1)+col('w-[114px]',['chk1','校核柱大样',1],['chk2','校核柱图元',1],['edge','生成柱边线',1,1])+col('',['fill','填充识别柱',1]),'pt-1'),
 group('w-[272px]','柱二次编辑',0,'pl-1',large('w-[66px] mr-[3px]','smart','智能布置',0,1)+col('w-[105px]',['adj','调整柱端头'],['judge','判断边角柱'],['chkdim','查改标注',0,1])+col('',['slant','设置斜柱']),'pt-1')
].join(''));

put('combos',[['首层','楼层','-ml-[9px]'],['柱','构件类别',''],['柱','构件类型',''],['KZ-1','构件名称','']]
 .map(([v,l,m])=>`<div class="relative ${m}"><select aria-label="${l}" class="block h-[23px] w-[100px] appearance-none border border-[#a5a8ad] bg-white pl-[3px] text-xs"><option>${v}</option></select><span class="pointer-events-none absolute top-[10px] right-[5px] block">${arrow()}</span></div>`).join(''));

const tree=[['zw','轴网(J)'],['+','轴线'],['-','柱'],['col','柱(Z)',1],['gz','构造柱(Z)'],['brick','砌体柱(Z)'],['+','墙'],['+','门窗洞'],['-','梁'],['beam','梁(L)'],['lbeam','连梁(G)'],['ring','圈梁(E)'],['+','板'],['+','楼梯'],['+','装修'],['+','土方'],['+','基础'],['-','其它'],['area','建筑面积(U)'],['level','平整场地(V)'],['apron','散水(S)'],['step','台阶'],['post','后浇带(JD)'],['eave','挑檐(T)'],['canopy','雨蓬(P)'],['balcony','阳台(Y)'],['roof','屋面(W)'],['insul','保温层(H)'],['fence','栏板(K)'],['top','压顶(YD)'],['rail','栏杆扶手(G)'],['+','自定义']];
put('tree',tree.map(([i,t,s])=>'+-'.includes(i)
 ?`<li class="flex h-6 items-center gap-[2px]">${ico(i=='+'?'closed':'opened')}${t}</li>`
 :`<li class="flex h-6 items-center pr-1 pl-[19px]"><span class="flex h-[21px] flex-1 items-center gap-[6px] pl-1 ${s?'bg-[#c9d9f0]':''}">${ico(i)}${t}</span></li>`).join(''));

put('sheetbar',[['add','添加图纸',0,1,'w-[91px]'],['split','分割',1,2,'w-[68px]'],['locate','定位',1,0,'w-[58px]'],['del','删除',1,0,'']]
 .map(([i,t,off,a,w])=>`<button class="${w} flex shrink-0 items-center gap-1 whitespace-nowrap ${off?'text-[#b2b2b2]':'text-[#333]'}">${ico(i,'size-[15px]')}${t}${a?`<span class="pl-1">${arrow()}</span>`:''}</button>`).join(''));

const bar='<svg class="mx-px -mt-[6px] inline size-[10px]" viewBox="0 0 10 10" aria-label="HRB400"><path d="M5 0v10M3.500 1v8M6.500 1v8M0 6.500h10M1.500 6V2.500h7V6" stroke="#000" fill="none"/></svg>';
const props=[['名称','KZ-1',0],['结构类别','框架柱',1],['定额类别','普通柱',1],['截面宽度(B边)(...','400',1],['截面高度(H边)(...','400',1],['全部纵筋','',1],['角筋','4'+bar+'22',1],['B边一侧中部筋','3'+bar+'20',1],['H边一侧中部筋','3'+bar+'20',1],['箍筋',bar+'10@100/200(4*4)',1],['节点区箍筋','',1],['箍筋肢数','4*4',0],['柱类型','(中柱)',1],['材质','预拌现浇砼',1],['混凝土类型','(预拌混凝土)',1],['混凝土强度等级','(C20)',1],['混凝土外加剂','(无)',0],['泵送类型','(混凝土泵)',0]];
put('props',props.map(([n,v,c],k)=>`<tr class="h-[21px] leading-4 whitespace-nowrap"><td class="border-r border-b border-[#c5c8ce] bg-[#f0f0f0] p-0 text-center text-[#333]">${k+1}</td><td class="border-r border-b border-[#c5c8ce] py-0 pr-0 pl-[3px] ${k==12?'':'text-[#1457f0]'}">${n}</td><td class="border-r border-b border-[#c5c8ce] py-0 pr-0 pl-[3px] ${k==5?'bg-[#e8e8e8]':''} ${k>5&&k<10?'text-[#444]':''}">${v}</td><td class="border-b border-[#c5c8ce] py-0 pr-0 pl-[11px]">${c?`<input type="checkbox" aria-label="${n.replace('...','')} 附加" class="block size-[14px] appearance-none rounded-xs border border-[#777] bg-white">`:''}</td></tr>`).join(''));
</script>
</body>
</html>
